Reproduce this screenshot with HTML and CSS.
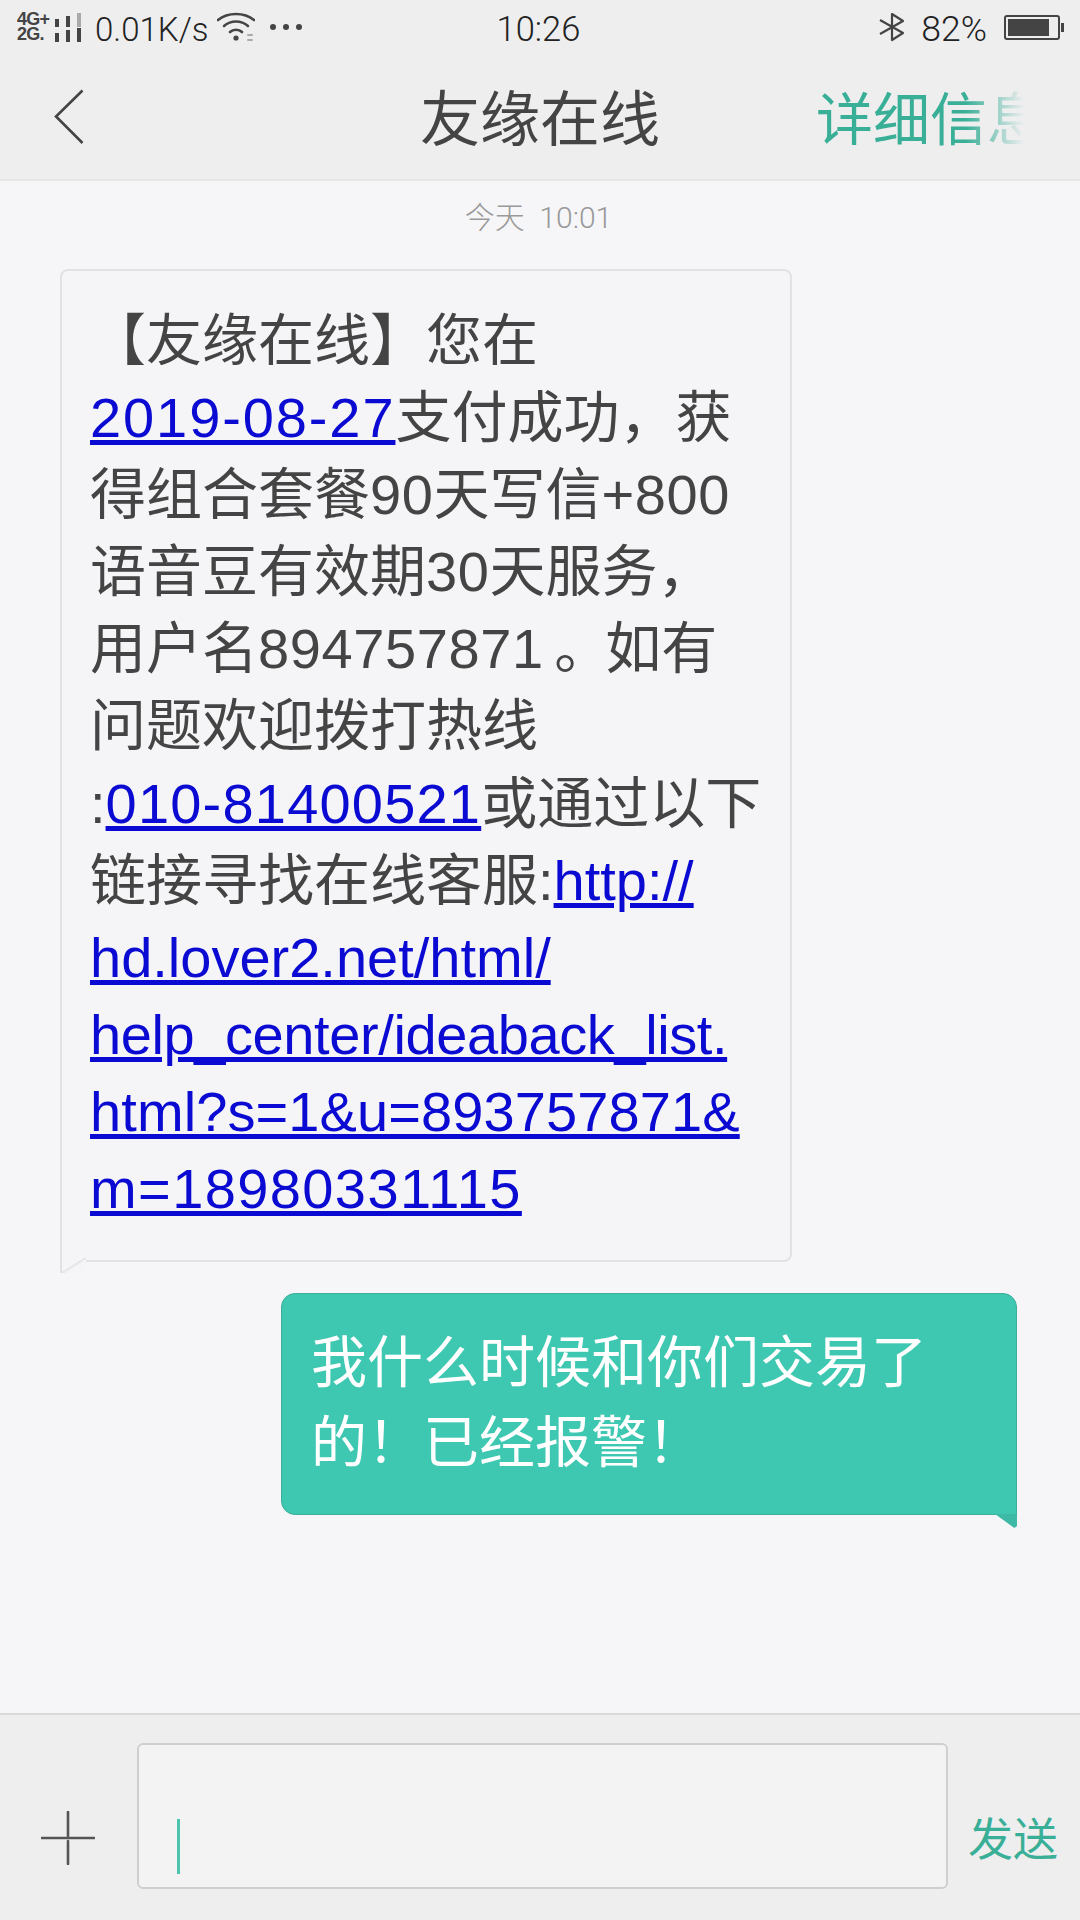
FILE: index.html
```html
<!DOCTYPE html>
<html lang="zh-CN">
<head>
    <meta charset="UTF-8">
    <title>友缘在线</title>
    <link rel="stylesheet" href="styles.css">
</head>
<body>
    <!-- Header -->
    <header class="header">
        <div class="status-bar">
            <div class="status-left">
                <div class="network">
                    <div class="network-row">
                        <span class="network-label">4G+</span>
                        <svg width="28" height="14" viewBox="0 0 28 14"><rect x="1" y="6" width="4" height="8" fill="#444"/><rect x="12" y="3" width="4" height="11" fill="#444"/><rect x="23" y="0" width="4" height="14" fill="#aaa"/></svg>
                    </div>
                    <div class="network-row">
                        <span class="network-label">2G.</span>
                        <svg width="28" height="14" viewBox="0 0 28 14"><rect x="1" y="5" width="4" height="9" fill="#444"/><rect x="12" y="2" width="4" height="12" fill="#444"/><rect x="23" y="0" width="4" height="14" fill="#444"/></svg>
                    </div>
                </div>
                <span class="status-text speed">0.01K/s</span>
                <svg class="wifi" width="38" height="30" viewBox="0 0 38 30" fill="none" stroke="#444" stroke-width="2.6" stroke-linecap="round">
                    <path d="M1 8C11 0 27 0 37 8"/>
                    <path d="M7 14C14 8 24 8 31 14"/>
                    <path d="M13 20C16 17 22 17 25 20"/>
                    <circle cx="19" cy="26" r="2.6" fill="#444" stroke="none"/>
                    <path d="M31 23h4M31 28h4" stroke="#aaa" stroke-width="2"/>
                </svg>
                <div class="dots"><i></i><i></i><i></i></div>
            </div>
            <span class="status-text clock">10:26</span>
            <div class="status-right">
                <svg width="26" height="30" viewBox="0 0 26 30" fill="none" stroke="#444" stroke-width="2.2" stroke-linejoin="round">
                    <path d="M1 8L24 21L13 28V2L24 9L1 22"/>
                </svg>
                <span class="status-text battery-text">82%</span>
                <div class="battery"><div class="battery-level"></div></div>
            </div>
        </div>
        <div class="nav-bar">
            <svg class="back-icon" width="30" height="56" viewBox="0 0 30 56" fill="none" stroke="#444" stroke-width="2.6">
                <path d="M28.5 1.5L2 27.5L28.5 54"/>
            </svg>
            <h1 class="nav-title">友缘在线</h1>
            <div class="nav-detail">详细信息</div>
        </div>
    </header>

    <!-- Messages -->
    <main class="messages">
        <div class="timestamp">今天&nbsp; 10:01</div>
        <div class="bubble bubble-in">
            【友缘在线】您在<br>
            <a href="#" class="date-link">2019-08-27</a>支付成功，获<br>
            得组合套餐<span class="num">90</span>天写信<span class="num">+800</span><br>
            语音豆有效期<span class="num">30</span>天服务，<br>
            用户名<span class="num">894757871</span><span class="period"> 。</span>如有<br>
            问题欢迎拨打热线<br>
            :<a href="#" class="phone-link">010-81400521</a>或通过以下<br>
            链接寻找在线客服:<a href="#">http://</a><br>
            <a href="#">hd.lover2.net/html/</a><br>
            <a href="#" class="tight-link">help_center/ideaback_list.</a><br>
            <a href="#" class="wide-link">html?s=1&amp;u=893757871&amp;</a><br>
            <a href="#" class="mobile-link">m=18980331115</a>
        </div>
        <div class="bubble bubble-out">
            我什么时候和你们交易了<br>
            的！已经报警！
        </div>
    </main>

    <!-- Input Bar -->
    <footer class="input-bar">
        <svg class="plus-icon" width="54" height="54" viewBox="0 0 54 54" stroke="#555" stroke-width="2.6" stroke-linecap="round">
            <path d="M1 27H53M27 1V25M27 30V53"/>
        </svg>
        <div class="input-box"><div class="caret"></div></div>
        <div class="send">发送</div>
    </footer>
</body>
</html>
```

FILE: styles.css
```css
/* Reset and Basic Styles */
* {
    box-sizing: border-box;
    margin: 0;
    padding: 0;
}

body {
    width: 1080px;
    height: 1920px;
    display: flex;
    flex-direction: column;
    overflow: hidden;
    background-color: #f6f6f8;
    color: #444;
    font-family: "Liberation Sans", "Noto Sans CJK SC", sans-serif;
}

/* Header */
.header {
    height: 181px;
    background-color: #eeeeef;
    border-bottom: 2px solid #e6e6e7;
}

.status-bar {
    height: 56px;
    padding: 0 20px 2px 17px;
    display: grid;
    grid-template-columns: 1fr auto 1fr;
    align-items: center;
}

.status-left, .status-right {
    display: flex;
    align-items: center;
}

.status-right {
    justify-content: flex-end;
}

.status-text {
    margin-top: 4px;
    font-family: Roboto, "Liberation Sans", sans-serif;
    font-weight: 300;
    font-size: 33px;
    color: #222;
}

.clock {
    font-size: 34.5px;
}

.network {
    width: 65px;
    display: flex;
    flex-direction: column;
}

.network-row {
    height: 15px;
    display: flex;
    align-items: flex-end;
    justify-content: space-between;
}

.network-label {
    font-size: 18px;
    line-height: 15px;
    font-weight: bold;
    color: #444;
    letter-spacing: -0.8px;
}

.speed {
    margin-left: 13px;
}

.wifi {
    margin-left: 8px;
}

.dots {
    margin-left: 15px;
    display: flex;
    gap: 7px;
}

.dots i {
    width: 6px;
    height: 6px;
    border-radius: 50%;
    background-color: #444;
}

.battery-text {
    margin-left: 16px;
    font-size: 35.5px;
}

.battery {
    width: 56px;
    height: 25px;
    margin-left: 17px;
    padding: 2px;
    border: 2px solid #444;
    border-radius: 3px;
    position: relative;
}

.battery::after {
    content: "";
    position: absolute;
    right: -6px;
    top: 6px;
    width: 3px;
    height: 9px;
    background-color: #444;
}

.battery-level {
    width: 86%;
    height: 100%;
    background-color: #444;
}

.nav-bar {
    height: 123px;
    padding: 0 56px 6px 54px;
    display: flex;
    align-items: center;
    position: relative;
}

.back-icon {
    margin-top: 4px;
}

.nav-title {
    position: absolute;
    left: 0;
    right: 0;
    text-align: center;
    font-size: 60px;
    font-weight: 400;
    color: #444;
}

.nav-detail {
    margin-left: auto;
    width: 208px;
    overflow: hidden;
    white-space: nowrap;
    font-size: 57px;
    color: #3aaf97;
    -webkit-mask-image: linear-gradient(to right, #000 72%, transparent 100%);
    mask-image: linear-gradient(to right, #000 72%, transparent 100%);
}

/* Messages */
.messages {
    flex: 1;
    padding: 19px 63px 0 60px;
    display: flex;
    flex-direction: column;
}

.timestamp {
    text-align: center;
    font-family: Roboto, "Noto Sans CJK SC", sans-serif;
    font-weight: 300;
    font-size: 30px;
    line-height: 36px;
    color: #999;
    margin-bottom: 33px;
}

.bubble {
    position: relative;
    font-size: 56px;
    white-space: nowrap;
}

.bubble a {
    color: #0a0ad2;
}

.bubble .date-link {
    letter-spacing: 1.9px;
}

.bubble .phone-link {
    letter-spacing: 1.2px;
}

.bubble .mobile-link {
    letter-spacing: 1.4px;
}

.bubble .wide-link {
    letter-spacing: 0.1px;
}

.bubble .tight-link {
    letter-spacing: -0.4px;
}

.num {
    letter-spacing: 0.6px;
}

.period {
    letter-spacing: -5px;
}

.bubble-in {
    width: 732px;
    height: 993px;
    padding: 31px 0 0 28px;
    line-height: 77.1px;
    background-color: #f5f5f7;
    border: 2px solid #e2e2e4;
    border-radius: 8px;
    border-bottom-left-radius: 0;
}

.bubble-in::after {
    content: "";
    position: absolute;
    left: -2px;
    bottom: -13px;
    width: 24px;
    height: 15px;
    border-left: 2px solid #e2e2e4;
    background-color: #f5f5f7;
    background-image: linear-gradient(to top left, transparent 46%, #e6e6e8 46%, #e6e6e8 54%, transparent 54%);
}

.bubble-out {
    width: 736px;
    height: 222px;
    margin-top: 31px;
    align-self: flex-end;
    padding: 29px 0 0 29px;
    line-height: 79.5px;
    color: #fff;
    background-color: #3fc8b1;
    border: 1px solid #3cae9b;
    border-radius: 14px;
    border-bottom-right-radius: 0;
}

.bubble-out::after {
    content: "";
    position: absolute;
    right: -1px;
    bottom: -14px;
    width: 22px;
    height: 14px;
    background-color: #3db9a5;
    clip-path: polygon(0 0, 100% 0, 100% 85%, 88% 100%);
}

/* Input Bar */
.input-bar {
    height: 207px;
    padding: 28px 0 33px 41px;
    display: flex;
    background-color: #eeeeef;
    border-top: 2px solid #d9d9da;
}

.plus-icon {
    margin-top: 68px;
}

.input-box {
    width: 811px;
    height: 146px;
    margin-left: 42px;
    padding: 74px 0 0 38px;
    background-color: #f3f3f4;
    border: 2px solid #cfcfd0;
    border-radius: 6px;
}

.caret {
    width: 3px;
    height: 55px;
    background-color: #4cc4ae;
}

.send {
    margin-left: 20px;
    margin-top: 68px;
    font-size: 45px;
    line-height: 60px;
    color: #3aaf97;
}
```
